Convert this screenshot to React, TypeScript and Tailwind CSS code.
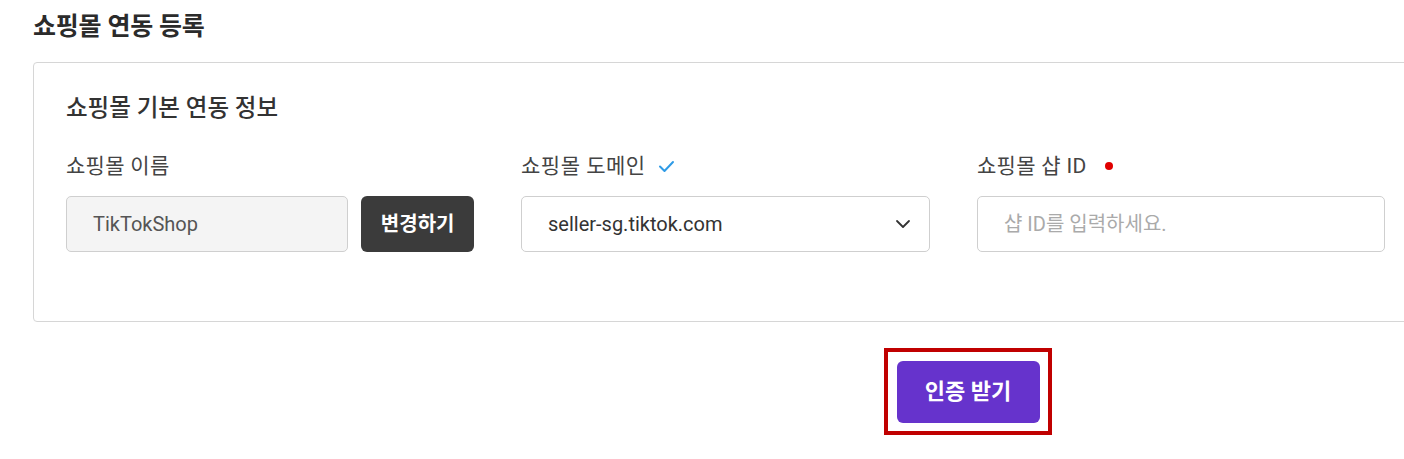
import React from "react";

const font = { fontFamily: 'Roboto, "Noto Sans CJK KR", "Noto Sans", sans-serif' };

export default function App() {
  return (
    <div className="w-[1404px] h-[459px] overflow-hidden bg-white text-[#333]" style={font}>
      <div className="w-[1460px] pl-[33px] pt-[10px]">
        <h1 className="text-[25px] font-bold leading-[34px] text-[#2b2b2b] tracking-[-0.2px]">쇼핑몰 연동 등록</h1>
        <div className="mt-[18px] w-[1386px] h-[260px] border border-[#d6d6d6] rounded-[4px] px-[32px] pt-[30px]">
          <h2 className="text-[23.5px] font-medium leading-[30px] text-[#333]">쇼핑몰 기본 연동 정보</h2>
          <div className="mt-[30px] grid grid-cols-[408px_409px_408px] gap-x-[47px]">
            <div>
              <div className="text-[21px] leading-[26px] text-[#444] h-[26px] tracking-[0.3px]">쇼핑몰 이름</div>
              <div className="mt-[17px] flex gap-[13px]">
                <div className="w-[283px] h-[56px] rounded-[5px] border border-[#cfcfcf] bg-[#f4f4f4] flex items-center pl-[26px] text-[20px] text-[#555]">
                  TikTokShop
                </div>
                <button className="w-[113px] h-[56px] rounded-[6px] bg-[#3b3b3b] text-white text-[20px] font-bold">
                  변경하기
                </button>
              </div>
            </div>
            <div>
              <div className="text-[21px] leading-[26px] text-[#444] h-[26px] flex items-center gap-[12px] tracking-[0.5px]">
                <span>쇼핑몰 도메인</span>
                <svg width="17" height="13" viewBox="0 0 17 13" fill="none">
                  <path d="M2 6.5 L6.5 11 L15 2" stroke="#2f9be6" strokeWidth="2" strokeLinecap="round" strokeLinejoin="round" />
                </svg>
              </div>
              <div className="mt-[17px] w-[409px] h-[56px] rounded-[5px] border border-[#cfcfcf] bg-white flex items-center justify-between pl-[26px] pr-[18px] text-[20px] text-[#333]">
                <span>seller-sg.tiktok.com</span>
                <svg width="16" height="10" viewBox="0 0 16 10" fill="none">
                  <path d="M2 2 L8 8 L14 2" stroke="#333" strokeWidth="1.8" strokeLinecap="round" strokeLinejoin="round" />
                </svg>
              </div>
            </div>
            <div>
              <div className="text-[21px] leading-[26px] text-[#444] h-[26px] flex items-center tracking-[0.3px]">
                <span>쇼핑몰 샵 ID</span>
                <span className="ml-[18px] w-[8px] h-[8px] rounded-full bg-[#e00000]" />
              </div>
              <div className="mt-[17px] w-[408px] h-[56px] rounded-[5px] border border-[#cfcfcf] bg-white flex items-center pl-[26px] text-[20px] text-[#aaa]">
                샵 ID를 입력하세요.
              </div>
            </div>
          </div>
        </div>
        <div className="mt-[26px] ml-[851px] w-[168px] h-[87px] border-[4px] border-[#c00000] flex items-center justify-center">
          <button className="w-[143px] h-[62px] rounded-[6px] bg-[#6633cc] text-white text-[22px] font-bold">
            인증 받기
          </button>
        </div>
      </div>
    </div>
  );
}
